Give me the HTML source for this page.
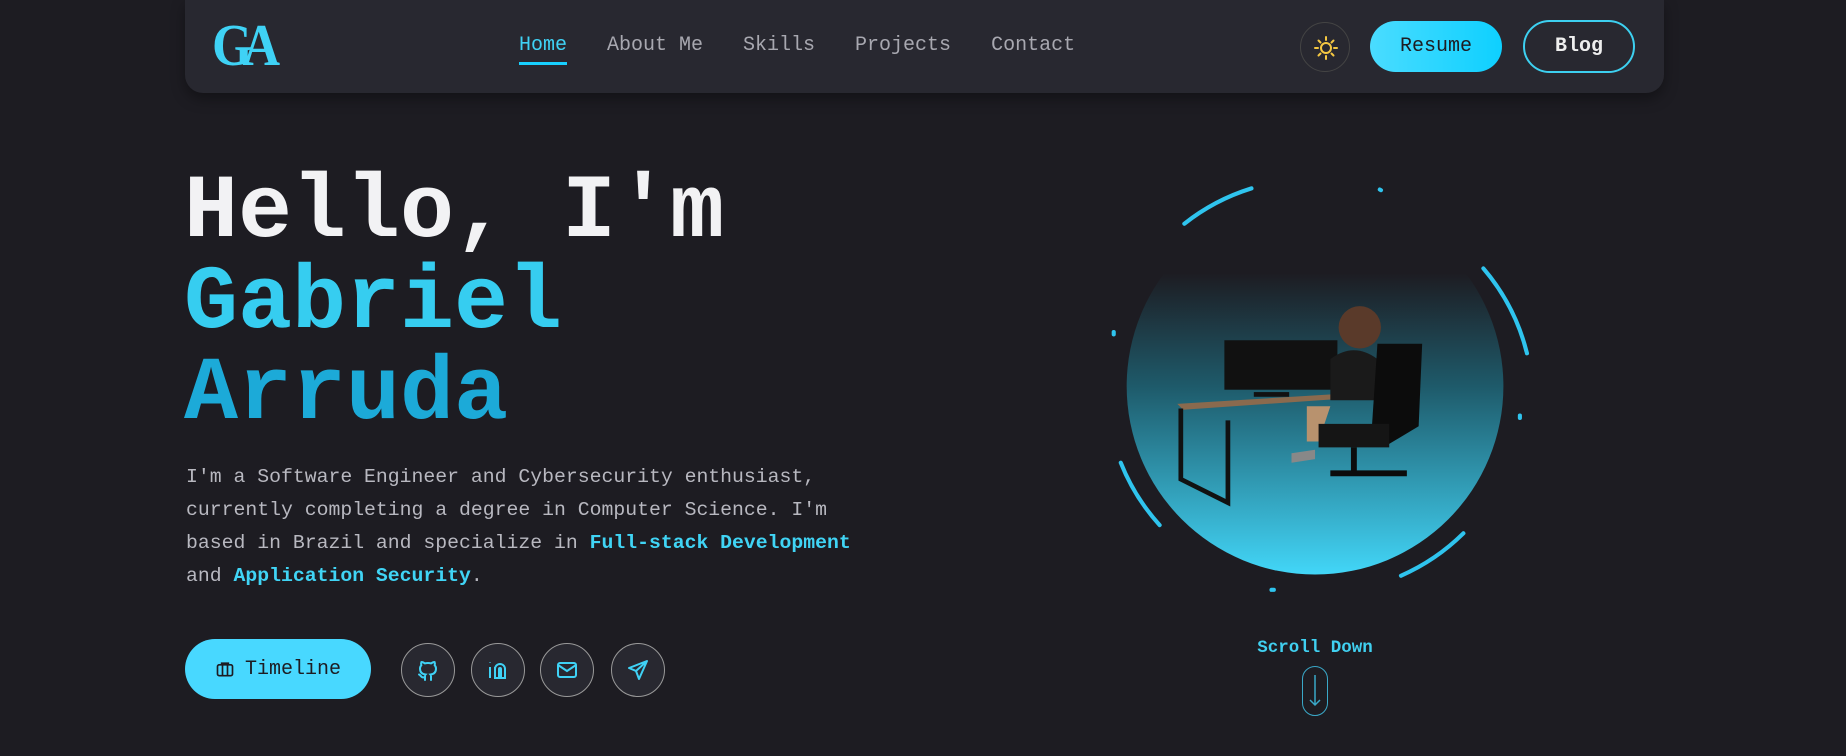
<!DOCTYPE html>
<html><head><meta charset="utf-8"><style>
*{margin:0;padding:0;box-sizing:border-box}
body{width:1846px;height:756px;background:#1d1c22;font-family:"Liberation Mono",monospace;overflow:hidden;position:relative;color:#eee}
.nav{position:absolute;left:185px;top:0;width:1479px;height:93px;background:#282830;border-radius:0 0 18px 18px;box-shadow:0 6px 14px rgba(0,0,0,.35)}
.logo{position:absolute;left:212px;top:12px;font-family:"Liberation Serif",serif;font-size:52px;color:#3fd2f5;letter-spacing:-10px;transform:scaleY(1.15);transform-origin:top left;font-weight:bold}
.links{position:absolute;top:34px;left:519px;font-size:20px;color:#a8a8b0;display:flex;gap:40px}
.links .a{color:#3fd2f5;position:relative}
.links .a:after{content:"";position:absolute;left:0;right:0;top:28px;height:3px;background:#18d0ff}
.sun{position:absolute;left:1300px;top:22px;width:50px;height:50px;border:1px solid #444;border-radius:50%}
.resume{position:absolute;left:1370px;top:21px;width:132px;height:51px;border-radius:26px;background:linear-gradient(90deg,#4adcff,#0ed0ff);color:#1d1c22;font-size:20px;display:flex;align-items:center;justify-content:center}
.blog{position:absolute;left:1523px;top:20px;width:112px;height:53px;border-radius:27px;border:2px solid #3dd0f0;color:#eee;font-size:20px;font-weight:bold;display:flex;align-items:center;justify-content:center}
h1{position:absolute;left:184px;top:168px;font-size:90px;line-height:91px;font-weight:bold;color:#f2f2f4}
h1 .g{color:#36cdf0}h1 .r{color:#1caad8}
p{position:absolute;left:186px;top:461px;font-size:19.8px;line-height:33px;color:#b8b8c0;white-space:nowrap}
p b{color:#40d4f5}
.tl{position:absolute;left:185px;top:639px;width:186px;height:60px;border-radius:30px;background:#48d8ff;color:#1d1c22;font-size:20px;display:flex;align-items:center;justify-content:center;gap:10px}
.ic{position:absolute;top:643px;width:54px;height:54px;border-radius:50%;border:1px solid #999;background:#282830;display:flex;align-items:center;justify-content:center}
.sd{position:absolute;left:1215px;width:200px;text-align:center;top:638px;font-size:17.5px;font-weight:bold;color:#40d0f0}
.mouse{position:absolute;left:1302px;top:666px;width:26px;height:50px;border:1.5px solid #3aa8c8;border-radius:13px}
</style></head><body>
<div class="nav"></div>
<div class="logo">GA</div>
<div class="links"><span class="a">Home</span><span>About Me</span><span>Skills</span><span>Projects</span><span>Contact</span></div>
<div class="sun"><svg width="50" height="50" viewBox="0 0 50 50" stroke="#f5c842" stroke-width="2" fill="none" stroke-linecap="round"><circle cx="25" cy="25" r="5"/><path d="M25 14v3M25 33v3M14 25h3M33 25h3M17.5 17.5l2 2M30.5 30.5l2 2M17.5 32.5l2-2M30.5 19.5l2-2"/></svg></div>
<div class="resume">Resume</div>
<div class="blog">Blog</div>
<h1>Hello, I'm<br><span class="g">Gabriel</span><br><span class="r">Arruda</span></h1>
<p>I'm a Software Engineer and Cybersecurity enthusiast,<br>currently completing a degree in Computer Science. I'm<br>based in Brazil and specialize in <b>Full-stack Development</b><br>and <b>Application Security</b>.</p>
<div class="tl"><svg width="20" height="20" viewBox="0 0 24 24" fill="none" stroke="#1d1c22" stroke-width="2"><rect x="3" y="7" width="18" height="13" rx="2"/><path d="M8 7V5h8v2M9 7v13M15 7v13"/></svg>Timeline</div>
<div class="ic" style="left:401px"><svg width="24" height="24" viewBox="0 0 24 24" fill="none" stroke="#3fd2f5" stroke-width="2" stroke-linecap="round"><path d="M9 19c-4 1.5-4-2-6-2.5M15 22v-3.5c0-1 .1-1.4-.5-2 2.8-.3 5.5-1.4 5.5-6a4.6 4.6 0 0 0-1.3-3.2 4.2 4.2 0 0 0-.1-3.2s-1.1-.3-3.5 1.3a12 12 0 0 0-6.2 0C6.5 3.8 5.4 4.1 5.4 4.1a4.2 4.2 0 0 0-.1 3.2A4.6 4.6 0 0 0 4 10.5c0 4.6 2.7 5.7 5.5 6-.6.6-.6 1.2-.5 2V22"/></svg></div>
<div class="ic" style="left:471px"><svg width="24" height="24" viewBox="0 0 24 24" fill="none" stroke="#3fd2f5" stroke-width="2"><path d="M4 9v11M4 4.5v.5"/><path d="M9 20V9h0v2a5 5 0 0 1 10 0v9h-4v-9a1 1 0 0 0-2 0v9z"/></svg></div>
<div class="ic" style="left:540px"><svg width="24" height="24" viewBox="0 0 24 24" fill="none" stroke="#3fd2f5" stroke-width="2"><rect x="3" y="5" width="18" height="14" rx="2"/><path d="M3 7l9 6 9-6"/></svg></div>
<div class="ic" style="left:611px"><svg width="24" height="24" viewBox="0 0 24 24" fill="none" stroke="#3fd2f5" stroke-width="2" stroke-linejoin="round"><path d="M21 3L3 10l7 3 3 8z M10 13l11-10"/></svg></div>
<svg style="position:absolute;left:0;top:0" width="1846" height="756" viewBox="0 0 1568 642.1">
<defs><linearGradient id="bg" x1="0" y1="0" x2="0" y2="1"><stop offset="0.2" stop-color="#1d1c22"/><stop offset="0.5" stop-color="#1e5a6a"/><stop offset="1" stop-color="#42d6f8"/></linearGradient></defs>
<circle cx="1117" cy="328" r="160" fill="url(#bg)"/>
<g stroke="#2fc4ee" stroke-width="3.5" fill="none" stroke-linecap="round">
<path d="M1006 190A176 176 0 0 1 1063 160"/><path d="M1260 228A176 176 0 0 1 1297 300"/><path d="M1243 453A176 176 0 0 1 1190 489"/><path d="M985 446A176 176 0 0 1 952 393"/>
<path d="M1172 161l1 .5M1291 353l0 2M1080 501l2 0M946 282l0 2"/></g>
<path d="M1000 343L1131 335L1135 339L1005 348Z" fill="#8a6a4e"/>
<path d="M1003 347v60l40 20v-70" stroke="#111" stroke-width="4" fill="none"/>
<rect x="1040" y="289" width="96" height="42" fill="#111"/>
<rect x="1065" y="333" width="30" height="4" fill="#111"/>
<circle cx="1155" cy="278" r="18" fill="#5a3a2a"/>
<path d="M1130 305q20-15 40 0l5 35h-45z" fill="#1a1a1a"/>
<path d="M1130 345h-20v30h10z" fill="#b8926e"/>
<path d="M1097 385l20-3v8l-20 3z" fill="#888"/>
<path d="M1170 292h38l-3 70-25 15-15-10z" fill="#0c0c0c"/>
<path d="M1120 360h60v20h-60z" fill="#151515"/>
<path d="M1150 380v20M1130 402h65" stroke="#0c0c0c" stroke-width="5"/>
</svg>
<div class="sd">Scroll Down</div>
<div class="mouse"><svg width="24" height="48" viewBox="0 0 24 48" fill="none" stroke="#3aa8c8" stroke-width="1.5"><path d="M12 8v30M7 33l5 5 5-5"/></svg></div>
</body></html>
